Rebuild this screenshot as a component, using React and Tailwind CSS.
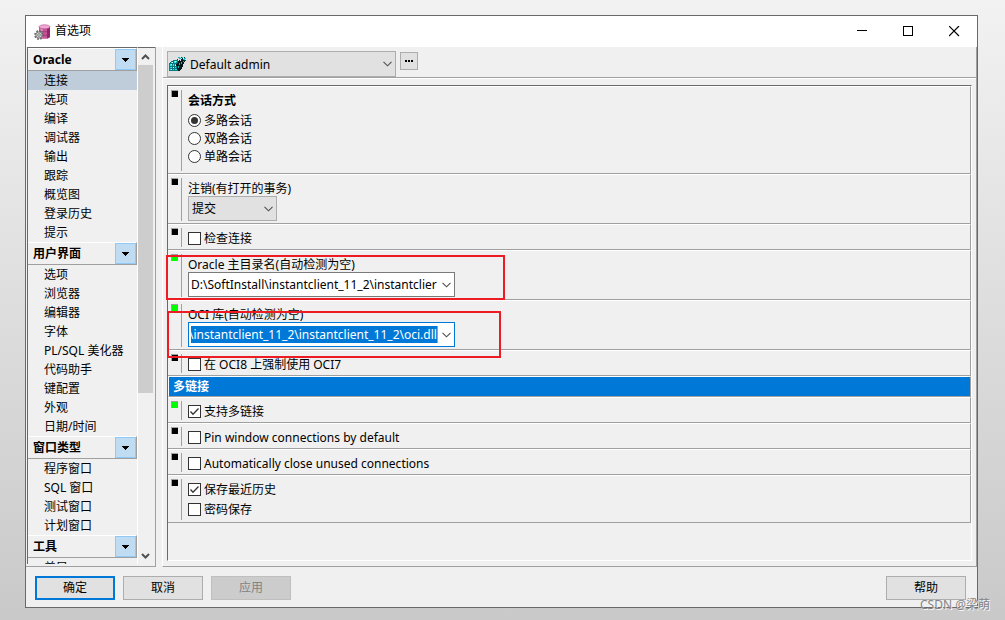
import React, { useLayoutEffect, useRef } from "react";

const groups = [
  { title: "Oracle", items: ["连接", "选项", "编译", "调试器", "输出", "跟踪", "概览图", "登录历史", "提示"] },
  { title: "用户界面", items: ["选项", "浏览器", "编辑器", "字体", "PL/SQL 美化器", "代码助手", "键配置", "外观", "日期/时间"] },
  { title: "窗口类型", items: ["程序窗口", "SQL 窗口", "测试窗口", "计划窗口"] },
  { title: "工具", items: ["差异"] },
];

function Chevron({ className = "" }) {
  return (
    <svg viewBox="0 0 9 6" className={`h-[6px] w-[9px] ${className}`} fill="none" stroke="#505050" strokeWidth="1.1" aria-hidden="true">
      <path d="M0.5 0.8 4.5 4.8 8.5 0.8" />
    </svg>
  );
}

function DatabaseIcon() {
  return (
    <svg viewBox="0 0 17 16" className="h-4 w-[17px]" aria-hidden="true">
      <path d="M5 3v9.500c0 1.400 2.400 2.300 5.500 2.300s5.500-.9 5.500-2.300V3z" fill="#c9569b" />
      <path d="M13 3v11.400c1.800-.4 3-1 3-1.900V3z" fill="#96266a" />
      <path d="M6.500 4v9l2 1V5z" fill="#e99bc8" />
      <ellipse cx="10.500" cy="2.800" rx="5.500" ry="2" fill="#efabd3" stroke="#b1488a" strokeWidth=".6" />
      <path d="M5 6.500c1 1.700 10 1.700 11 0M5 10c1 1.700 10 1.700 11 0" stroke="#8a2a64" strokeWidth=".7" fill="none" />
      <circle cx="5" cy="11" r="4" fill="none" stroke="#6a6a6a" strokeWidth="1.800" strokeDasharray="1.700 1.440" />
      <circle cx="5" cy="11" r="3.200" fill="#d4d4d4" stroke="#6b6b6b" strokeWidth=".9" />
      <circle cx="5" cy="11" r="1.300" fill="#f5f5f5" stroke="#666" strokeWidth=".8" />
    </svg>
  );
}

function CubeIcon() {
  return (
    <svg viewBox="0 0 17 16" className="h-4 w-[17px]" shapeRendering="crispEdges" aria-hidden="true">
      <path d="M0 7h1V6h1V5h2V4h5v1h2v9h-1v1H0z" fill="#067a7e" />
      <path d="M1 8h2v2H1zM4 8h1v2H4zM6 8h1v2H6zM1 11h2v1H1zM4 11h1v1H4zM6 11h1v1H6zM1 13h2v1H1zM4 13h1v1H4zM6 13h2v1H6zM2 6h2v1H2zM5 5h3v1H5zM5 6h2v1H5z" fill="#2fe3e6" />
      <path d="M2 8h1v1H2zM4 11h1v1H4zM6 9h1v1H6zM2 13h1v1H2zM6 5h1v1H6zM3 6h1v1H3z" fill="#fff" />
      <path d="M8 7h1V5h1V4h1v1h1V3h1V2h1v2h1v1h1v1h-1v2h-1v3h-1v2h-1v1h-1v1H9v-1H8v-4H7V8h1z" fill="#04191b" />
      <path d="M9 1h2v1H9zM10 2h1v1h-1zM11 2h1v1h-1zM13 1h1v1h-1zM15 2h2v1h-2zM14 3h2v1h-2zM10 7h1v2h-1zM12 6h1v2h-1zM9 10h1v2H9zM14 5h1v1h-1z" fill="#17b9be" />
      <path d="M8 3h1v1H8zM12 1h1v1h-1zM15 4h2v1h-2zM15 1h1v1h-1z" fill="#174246" />
    </svg>
  );
}

function TitleBar() {
  const button = "flex h-full w-[46px] items-center justify-center";
  return (
    <header className="flex h-[31px] shrink-0 items-center bg-white pl-2">
      <DatabaseIcon />
      <h1 className="ml-1 flex-1 pb-[2px] text-xs">首选项</h1>
      <button aria-label="最小化" className={button}>
        <svg viewBox="0 0 11 11" className="size-[11px]" stroke="#000" shapeRendering="crispEdges"><path d="M0 4.500h10" /></svg>
      </button>
      <button aria-label="最大化" className={button}>
        <svg viewBox="0 0 11 11" className="size-[11px]" stroke="#000" fill="none" shapeRendering="crispEdges"><path d="M.5.5h9v9h-9z" /></svg>
      </button>
      <button aria-label="关闭" className={button}>
        <svg viewBox="0 0 11 11" className="size-[11px]" stroke="#000" strokeWidth="1.200" fill="none"><path d="M0 0l10 10M10 0l-10 10" /></svg>
      </button>
    </header>
  );
}

function Sidebar() {
  return (
    <aside className="flex w-[130px] shrink-0 border-r border-b border-[#a0a0a0] pb-[2px] pl-px">
      <nav aria-label="首选项类别" className="w-[111px] overflow-hidden border-t border-r border-l border-t-[#696969] border-r-white border-l-[#696969]">
        {groups.map((group, g) => (
          <section key={group.title}>
            <div className="flex h-[23px] items-center justify-between border-t border-r border-b border-t-white border-r-[#a0a0a0] border-b-[#a0a0a0] pl-[5px]">
              <h2 className="text-xs font-bold">{group.title}</h2>
              <button aria-label={`${group.title} 菜单`} className="flex h-[21px] w-[21px] items-center justify-center border border-[#90c8f6] bg-[#c0dcf3]">
                <svg viewBox="0 0 7 4" className="h-1 w-[7px]" shapeRendering="crispEdges"><path d="M0 0h7L3.500 4z" /></svg>
              </button>
            </div>
            <ul>
              {group.items.map((item, i) => (
                <li key={item}>
                  <button className={`block h-[19px] w-full pl-4 text-left leading-[19px] whitespace-nowrap ${g === 0 && i === 0 ? "bg-[#bfcddb]" : ""}`}>
                    {item}
                  </button>
                </li>
              ))}
            </ul>
          </section>
        ))}
      </nav>
      <div className="flex flex-1 flex-col border-t border-[#696969] pr-[2px]">
        <button aria-label="向上滚动" className="flex h-[17px] items-center justify-center">
          <svg viewBox="0 0 9 6" className="h-[6px] w-[9px]" fill="none" stroke="#505050" strokeWidth="2"><path d="M1 5 4.500 1.500 8 5" /></svg>
        </button>
        <div className="min-h-0 flex-1">
          <div className="h-[68%] bg-[#cdcdcd]" />
        </div>
        <button aria-label="向下滚动" className="flex h-[17px] items-center justify-center">
          <svg viewBox="0 0 9 6" className="h-[6px] w-[9px]" fill="none" stroke="#505050" strokeWidth="2"><path d="M1 1 4.500 4.500 8 1" /></svg>
        </button>
      </div>
    </aside>
  );
}

function Row({ changed = false, className = "pb-[2px]", children }) {
  return (
    <div className="flex border-t border-r border-b border-t-white border-r-[#a0a0a0] border-b-[#a0a0a0] pl-[3px]">
      <span className={`mt-[3px] size-[7px] shrink-0 border-t border-l border-[#a0a0a0] ${changed ? "bg-[#00ff00]" : "bg-black"}`} />
      <span className="mt-[3px] mb-[2px] ml-[3px] w-px shrink-0 bg-[#a0a0a0]" />
      <div className={`relative ml-[6px] min-w-0 flex-1 pt-1 ${className}`}>{children}</div>
    </div>
  );
}

function Check({ label, checked = false }) {
  return (
    <label className="flex h-[18px] w-fit items-center gap-[3px]">
      <span className="grid size-[13px]">
        <input type="checkbox" defaultChecked={checked} className="peer col-start-1 row-start-1 size-[13px] appearance-none border border-[#333] bg-white" />
        <svg viewBox="0 0 13 13" className="pointer-events-none invisible col-start-1 row-start-1 size-[13px] peer-checked:visible" fill="none" stroke="#333" strokeWidth="1.300">
          <path d="M2.500 6.500 5 9.200 10.500 3.500" />
        </svg>
      </span>
      <span className="h-[18px] leading-5">{label}</span>
    </label>
  );
}

function Radio({ label, checked = false }) {
  return (
    <label className="flex h-[18px] w-fit items-center gap-[3px]">
      <span className="grid size-[13px]">
        <input type="radio" name="session" defaultChecked={checked} className="peer col-start-1 row-start-1 size-[13px] appearance-none rounded-full border border-[#333] bg-white" />
        <span className="pointer-events-none invisible col-start-1 row-start-1 m-[3px] rounded-full bg-[#333] peer-checked:visible" />
      </span>
      <span className="h-[18px] leading-5">{label}</span>
    </label>
  );
}

function PathRow({ id, label, value, active = false, callout }) {
  const input = useRef(null);

  // The active field keeps the end of its path, where the caret is, in view.
  useLayoutEffect(() => {
    if (active) input.current.scrollLeft = input.current.scrollWidth;
  }, [active]);

  return (
    <Row changed>
      <label htmlFor={id} className="block h-[17px] leading-[19px]">{label}</label>
      <div className={`flex h-[25px] w-[267px] border bg-white py-[3px] pl-[2px] ${active ? "border-[#0078d7]" : "border-[#7a7a7a]"}`}>
        <input
          ref={input}
          id={id}
          defaultValue={value}
          className={`min-w-0 flex-1 leading-[17px] outline-none ${active ? "border-r border-[#ff8728] bg-[#0078d7] text-white" : ""}`}
        />
        <button aria-label={`${label} 列表`} className="flex w-4 items-center justify-center"><Chevron /></button>
      </div>
      <span className={`pointer-events-none absolute z-10 border-2 border-[#ed1c24] ${callout}`} />
    </Row>
  );
}

function Settings() {
  return (
    <div className="mt-[6px] mr-1 mb-[5px] ml-1 flex-1 border border-t-[#696969] border-r-white border-b-white border-l-[#696969]">
      <Row className="pb-2">
        <fieldset>
          <legend className="mb-[2px] h-[18px] leading-5 font-bold">会话方式</legend>
          <Radio label="多路会话" checked />
          <Radio label="双路会话" />
          <Radio label="单路会话" />
        </fieldset>
      </Row>
      <Row>
        <label htmlFor="logoff" className="block h-[17px] leading-[19px]">注销(有打开的事务)</label>
        <div className="grid w-[89px] items-center">
          <select id="logoff" className="col-start-1 row-start-1 h-[25px] appearance-none border border-[#adadad] bg-[#e1e1e1] pl-[3px]">
            <option>提交</option>
          </select>
          <Chevron className="pointer-events-none col-start-1 row-start-1 mr-1 justify-self-end" />
        </div>
      </Row>
      <Row><Check label="检查连接" /></Row>
      <PathRow id="home" label="Oracle 主目录名(自动检测为空)" value="D:\SoftInstall\instantclient_11_2\instantclier" callout="top-1 -left-[22px] h-[45px] w-[339px]" />
      <PathRow id="oci" label="OCI 库(自动检测为空)" value="\instantclient_11_2\instantclient_11_2\oci.dll" active callout="top-[10px] -left-[21px] h-[47px] w-[334px]" />
      <Row><Check label="在 OCI8 上强制使用 OCI7" /></Row>
      <h2 className="h-[21px] border-t border-r border-b border-l border-t-white border-r-[#a0a0a0] border-b-[#a0a0a0] border-l-white bg-[#0078d7] pl-1 leading-[19px] font-bold text-white">多链接</h2>
      <Row changed><Check label="支持多链接" checked /></Row>
      <Row><Check label="Pin window connections by default" /></Row>
      <Row><Check label="Automatically close unused connections" /></Row>
      <Row className="flex flex-col gap-[2px] pb-1">
        <Check label="保存最近历史" checked />
        <Check label="密码保存" />
      </Row>
    </div>
  );
}

export default function App() {
  const button = "h-6 w-20 text-xs";
  return (
    <div className="relative flex h-screen flex-col bg-linear-to-b from-[#f2f2f2] to-[#c9c9c9] pt-[15px] pr-[27px] pb-3 pl-[25px] font-['Noto_Sans','Noto_Sans_CJK_SC',sans-serif] text-xs text-black">
      <div className="flex min-h-0 flex-1 flex-col border border-[#696969] bg-[#f0f0f0]">
        <TitleBar />
        <div className="flex min-h-0 flex-1 gap-[6px]">
          <Sidebar />
          <main className="flex min-w-0 flex-1 flex-col border-r border-b border-l border-r-[#a0a0a0] border-b-[#a0a0a0] border-l-white">
            <div className="flex h-[31px] shrink-0 gap-1 border-b border-[#a0a0a0] pt-1 pl-1">
              <div className="grid w-[229px] items-center">
                <select aria-label="首选项集" className="col-start-1 row-start-1 h-[26px] appearance-none border border-[#adadad] bg-[#e1e1e1] pt-[2px] pl-[22px]">
                  <option>Default admin</option>
                </select>
                <span className="pointer-events-none col-start-1 row-start-1 ml-[2px]"><CubeIcon /></span>
                <Chevron className="pointer-events-none col-start-1 row-start-1 mr-1 justify-self-end" />
              </div>
              <button aria-label="更多" className="mt-px flex size-[18px] items-center justify-center border border-[#adadad] bg-[#e1e1e1]">
                <svg viewBox="0 0 8 2" className="h-[2px] w-2" shapeRendering="crispEdges"><path d="M0 0h2v2H0zM3 0h2v2H3zM6 0h2v2H6z" /></svg>
              </button>
            </div>
            <div className="flex flex-1 flex-col border-t border-white">
              <Settings />
            </div>
          </main>
        </div>
        <footer className="flex shrink-0 gap-2 pt-[9px] pr-[11px] pb-[7px] pl-[9px]">
          <button className={`${button} border-2 border-[#0078d7] bg-[#e1e1e1]`}>确定</button>
          <button className={`${button} border border-[#adadad] bg-[#e1e1e1]`}>取消</button>
          <button disabled className={`${button} border border-[#bfbfbf] bg-[#cccccc] text-[#838383]`}>应用</button>
          <button className={`${button} ml-auto border border-[#adadad] bg-[#e1e1e1]`}>帮助</button>
        </footer>
      </div>
      <span className="absolute right-[15px] bottom-[7px] text-xs text-[#858585] [text-shadow:1px_1px_0_#f4f4f4]">CSDN @梁萌</span>
    </div>
  );
}
